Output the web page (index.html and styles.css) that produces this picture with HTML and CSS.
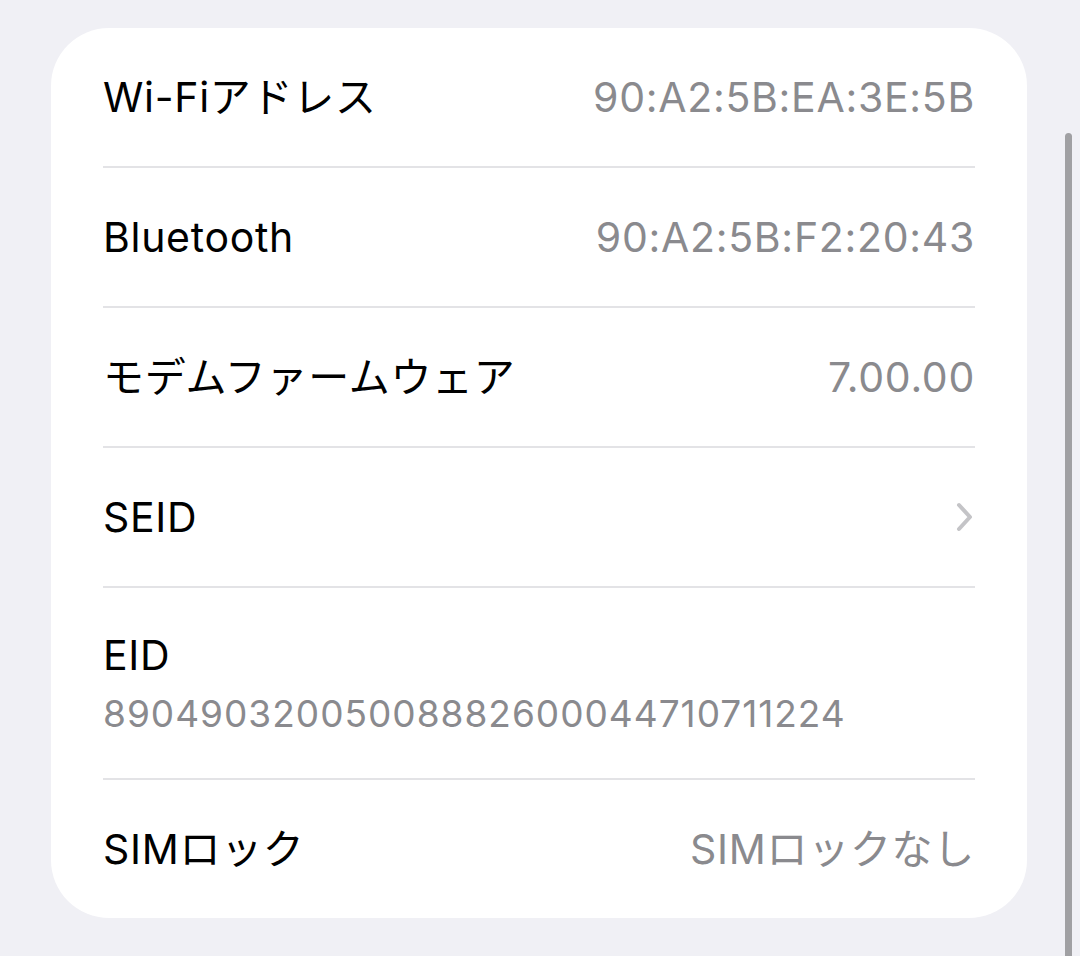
FILE: index.html
```html
<!DOCTYPE html>
<html lang="ja">
<head>
    <meta charset="UTF-8">
    <meta name="viewport" content="width=device-width, initial-scale=1.0">
    <title>情報</title>
    <link rel="stylesheet" href="styles.css">
</head>
<body>
    <div class="card">
        <div class="row">
            <span class="label">Wi-Fiアドレス</span>
            <span class="value">90:A2:5B:EA:3E:5B</span>
        </div>
        <div class="row">
            <span class="label">Bluetooth</span>
            <span class="value">90:A2:5B:F2:20:43</span>
        </div>
        <div class="row">
            <span class="label">モデムファームウェア</span>
            <span class="value">7.00.00</span>
        </div>
        <div class="row">
            <span class="label">SEID</span>
            <svg class="chevron" width="18" height="30" viewBox="0 0 18 30">
                <path d="M3 3 L14 15 L3 27" fill="none" stroke="#c4c4c7" stroke-width="4" stroke-linecap="round" stroke-linejoin="round"/>
            </svg>
        </div>
        <div class="row row-stack">
            <span class="label">EID</span>
            <span class="value value-small">89049032005008882600044710711224</span>
        </div>
        <div class="row">
            <span class="label">SIMロック</span>
            <span class="value">SIMロックなし</span>
        </div>
    </div>
    <div class="scroll-indicator"></div>
</body>
</html>
```

FILE: styles.css
```css
body {
    margin: 0;
    background-color: #f0f0f5;
    font-family: Inter, "Noto Sans CJK JP", sans-serif;
    font-size: 41px;
    line-height: 50px;
    letter-spacing: 0.7px;
    overflow: hidden;
}

.card {
    margin: 28px 0 0 51px;
    width: 976px;
    background-color: #ffffff;
    border-radius: 58px;
}

.row {
    height: 138px;
    margin: 0 52px;
    display: flex;
    align-items: center;
    justify-content: space-between;
    border-bottom: 2px solid #e3e3e6;
}

.row:last-child {
    border-bottom: none;
}

.row-stack {
    height: auto;
    flex-direction: column;
    align-items: flex-start;
    gap: 9px;
    padding: 42px 0 39px;
}

.label {
    color: #000000;
}

.value {
    color: #8a8a8e;
}

.value-small {
    font-size: 37px;
    letter-spacing: 1px;
}

.chevron {
    margin-right: 1px;
}

.scroll-indicator {
    position: absolute;
    left: 1065px;
    top: 133px;
    width: 7px;
    height: 840px;
    border-radius: 4px;
    background-color: #a0a0a3;
}
```
